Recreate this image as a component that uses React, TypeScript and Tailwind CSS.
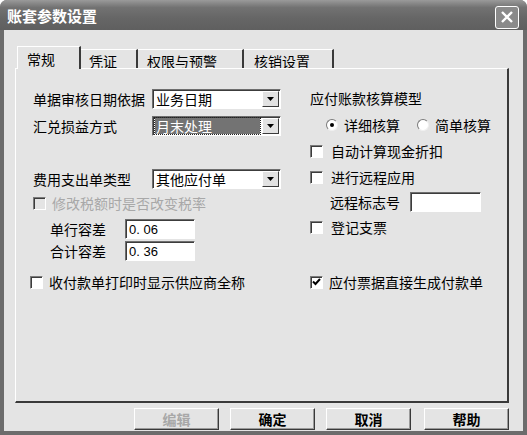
import React from "react";

const font = "font-['Noto_Sans_CJK_SC','Liberation_Sans',sans-serif]";

function Arrow() {
  return (
    <div className="w-[17px] h-[16px] bg-[#e2e2e2] border border-t-white border-l-white border-r-[#3a3a3a] border-b-[#3a3a3a] flex items-center justify-center">
      <svg width="7" height="4" viewBox="0 0 7 4">
        <path d="M0 0H7L3.5 4Z" fill="#000" />
      </svg>
    </div>
  );
}

function Select({ value, hl }: { value: string; hl?: boolean }) {
  return (
    <div className="w-[129px] h-[20px] bg-white border border-t-[#6e6e6e] border-l-[#6e6e6e] border-r-white border-b-white flex items-center pl-[1px] pr-[1px] shadow-[inset_1px_1px_0_#3c3c3c]">
      {hl ? (
        <div className="flex-1 h-[16px] ml-[1px] mr-[2px] bg-[#737373] text-white outline outline-1 outline-dotted outline-[#222] flex items-center pl-[1px] text-[14px] leading-none">
          {value}
        </div>
      ) : (
        <div className="flex-1 pl-[2px] text-[14px] leading-none text-black">{value}</div>
      )}
      <Arrow />
    </div>
  );
}

function Box({ checked, disabled }: { checked?: boolean; disabled?: boolean }) {
  return (
    <div
      className={
        "w-[13px] h-[13px] shrink-0 border border-t-[#7a7a7a] border-l-[#7a7a7a] border-r-white border-b-white shadow-[inset_1px_1px_0_#3c3c3c] flex items-center justify-center " +
        (disabled ? "bg-[#e4e4e4]" : "bg-white")
      }
    >
      {checked && (
        <svg width="9" height="8" viewBox="0 0 9 8">
          <path d="M1 3.5L3.5 6L8 1" stroke="#000" strokeWidth="2" fill="none" />
        </svg>
      )}
    </div>
  );
}

function Check({ label, checked, disabled, gap = "gap-[6px]" }: { label: string; checked?: boolean; disabled?: boolean; gap?: string }) {
  return (
    <div className={"flex items-center h-[20px] " + gap}>
      <Box checked={checked} disabled={disabled} />
      <span className={"text-[14px] leading-none " + (disabled ? "text-[#a8a8a8]" : "text-black")}>{label}</span>
    </div>
  );
}

function Radio({ label, on }: { label: string; on?: boolean }) {
  return (
    <div className="flex items-center gap-[6px]">
      <div className="w-[12px] h-[12px] rounded-full bg-white border border-t-[#7a7a7a] border-l-[#7a7a7a] border-r-[#f0f0f0] border-b-[#f0f0f0] flex items-center justify-center">
        {on && <div className="w-[4px] h-[4px] rounded-full bg-black" />}
      </div>
      <span className="text-[14px] leading-none">{label}</span>
    </div>
  );
}

function Input({ value, w }: { value: string; w: string }) {
  return (
    <div className={"h-[20px] bg-white border border-t-[#6e6e6e] border-l-[#6e6e6e] border-r-white border-b-white shadow-[inset_1px_1px_0_#3c3c3c] flex items-center pl-[3px] " + w}>
      <span className="font-['Liberation_Sans',sans-serif] text-[13px] leading-none">{value}</span>
    </div>
  );
}

function Btn({ label, disabled }: { label: string; disabled?: boolean }) {
  return (
    <div className="w-[85px] h-[22px] bg-[#e4e4e4] border border-t-white border-l-white border-r-[#3a3a3a] border-b-[#3a3a3a] shadow-[inset_-1px_-1px_0_#9a9a9a] flex items-center justify-center">
      <span className={"text-[14px] leading-none font-bold " + (disabled ? "text-[#a8a8a8]" : "text-black")}>{label}</span>
    </div>
  );
}

export default function App() {
  return (
    <div className={"w-[527px] h-[435px] bg-[#6c6c6c] rounded-t-[7px] flex flex-col " + font}>
      {/* title bar */}
      <div className="h-[30px] shrink-0 rounded-t-[7px] bg-[linear-gradient(#9a9a9a,#727272_25%,#666666_60%,#5f5f5f)] flex items-center justify-between pl-[7px] pr-[8px]">
        <span className="text-white font-bold text-[15px] leading-none">账套参数设置</span>
        <div className="w-[24px] h-[23px] mt-[4px] rounded-[3px] border border-white bg-[#8a8a8a] flex items-center justify-center">
          <svg width="14" height="14" viewBox="0 0 14 14">
            <path d="M2 2L12 12M12 2L2 12" stroke="#fff" strokeWidth="2.4" />
          </svg>
        </div>
      </div>
      {/* body */}
      <div className="flex-1 mx-[4px] mb-[4px] bg-[#e4e4e4] flex flex-col pl-[11px] pr-[14px] pt-[16px]">
        {/* tabs */}
        <div className="flex items-end h-[22px] pl-[2px]">
          <div className="relative z-10 h-[23px] -mb-[1px] w-[64px] bg-[#e4e4e4] border-l border-t border-white border-r-2 border-r-[#3a3a3a] flex items-start pl-[9px] pt-[5px]">
            <span className="text-[14px] leading-none">常规</span>
          </div>
          <div className="h-[19px] w-[57px] border-t border-white border-r-2 border-r-[#3a3a3a] flex items-start pl-[8px] pt-[4px]">
            <span className="text-[14px] leading-none">凭证</span>
          </div>
          <div className="h-[19px] w-[106px] border-t border-white border-r-2 border-r-[#3a3a3a] flex items-start pl-[9px] pt-[4px]">
            <span className="text-[14px] leading-none">权限与预警</span>
          </div>
          <div className="h-[19px] w-[90px] border-t border-white border-r-2 border-r-[#3a3a3a] flex items-start pl-[10px] pt-[4px]">
            <span className="text-[14px] leading-none">核销设置</span>
          </div>
        </div>
        {/* panel */}
        <div className="h-[335px] border-l border-t border-white border-r-2 border-b-2 border-r-[#3a3a3a] border-b-[#3a3a3a] flex flex-col">
          <div className="flex">
            {/* left column */}
            <div className="w-[294px] pl-[17px] pt-[20px] flex flex-col">
              <div className="flex items-center h-[20px]">
                <span className="w-[119px] text-[14px] leading-none">单据审核日期依据</span>
                <Select value="业务日期" />
              </div>
              <div className="flex items-center h-[20px] mt-[7px]">
                <span className="w-[119px] text-[14px] leading-none">汇兑损益方式</span>
                <Select value="月末处理" hl />
              </div>
              <div className="flex items-center h-[20px] mt-[33px]">
                <span className="w-[119px] text-[14px] leading-none">费用支出单类型</span>
                <Select value="其他应付单" />
              </div>
              <div className="mt-[4px]">
                <Check label="修改税额时是否改变税率" disabled />
              </div>
              <div className="flex items-center h-[20px] mt-[6px] pl-[17px]">
                <span className="w-[75px] text-[14px] leading-none">单行容差</span>
                <Input value="0. 06" w="w-[70px]" />
              </div>
              <div className="flex items-center h-[20px] mt-[2px] pl-[17px]">
                <span className="w-[75px] text-[14px] leading-none">合计容差</span>
                <Input value="0. 36" w="w-[70px]" />
              </div>
            </div>
            {/* right column */}
            <div className="flex-1 pt-[19px] flex flex-col">
              <div className="h-[20px] flex items-center">
                <span className="text-[14px] leading-none">应付账款核算模型</span>
              </div>
              <div className="h-[20px] mt-[7px] flex items-center gap-[17px] pl-[16px]">
                <Radio label="详细核算" on />
                <Radio label="简单核算" />
              </div>
              <div className="mt-[6px]">
                <Check label="自动计算现金折扣" gap="gap-[8px]" />
              </div>
              <div className="mt-[6px]">
                <Check label="进行远程应用" gap="gap-[8px]" />
              </div>
              <div className="h-[20px] mt-[5px] flex items-center pl-[20px]">
                <span className="w-[80px] text-[14px] leading-none">远程标志号</span>
                <Input value="" w="w-[71px]" />
              </div>
              <div className="mt-[5px]">
                <Check label="登记支票" gap="gap-[8px]" />
              </div>
            </div>
          </div>
          <div className="flex mt-[11px]">
            <div className="w-[294px] pl-[14px]">
              <Check label="收付款单打印时显示供应商全称" />
            </div>
            <div className="flex-1">
              <Check label="应付票据直接生成付款单" checked />
            </div>
          </div>
        </div>
        {/* buttons */}
        <div className="flex justify-end mt-[5px] gap-[11px]">
          <Btn label="编辑" disabled />
          <Btn label="确定" />
          <Btn label="取消" />
          <div className="ml-[2px]">
            <Btn label="帮助" />
          </div>
        </div>
      </div>
    </div>
  );
}
